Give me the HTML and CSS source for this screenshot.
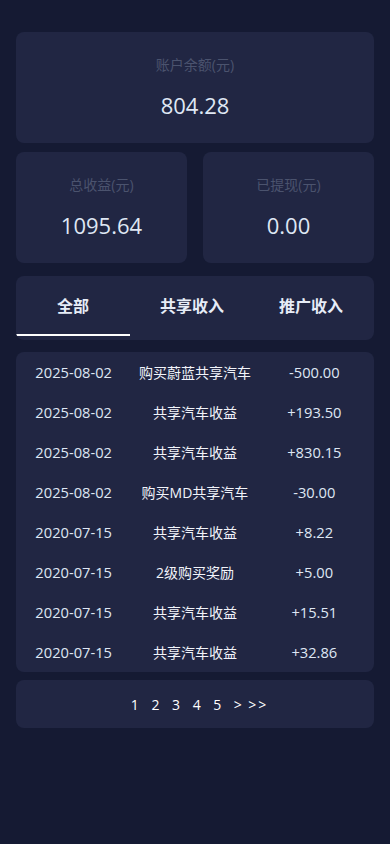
FILE: index.html
```html
<!DOCTYPE html>
<html lang="zh-CN">
<head>
    <meta charset="UTF-8">
    <meta name="viewport" content="width=device-width, initial-scale=1.0">
    <title>我的收益</title>
    <link rel="stylesheet" href="styles.css">
</head>
<body>
    <div class="page">
        <div class="card stat">
            <div class="stat-label">账户余额(元)</div>
            <div class="stat-value">804.28</div>
        </div>
        <div class="stat-row">
            <div class="card stat">
                <div class="stat-label">总收益(元)</div>
                <div class="stat-value">1095.64</div>
            </div>
            <div class="card stat">
                <div class="stat-label">已提现(元)</div>
                <div class="stat-value">0.00</div>
            </div>
        </div>
        <div class="card tabs">
            <div class="tab active">全部</div>
            <div class="tab">共享收入</div>
            <div class="tab">推广收入</div>
        </div>
        <div class="card records">
            <div class="record"><span class="date">2025-08-02</span><span class="desc">购买蔚蓝共享汽车</span><span class="amount">-500.00</span></div>
            <div class="record"><span class="date">2025-08-02</span><span class="desc">共享汽车收益</span><span class="amount">+193.50</span></div>
            <div class="record"><span class="date">2025-08-02</span><span class="desc">共享汽车收益</span><span class="amount">+830.15</span></div>
            <div class="record"><span class="date">2025-08-02</span><span class="desc">购买MD共享汽车</span><span class="amount">-30.00</span></div>
            <div class="record"><span class="date">2020-07-15</span><span class="desc">共享汽车收益</span><span class="amount">+8.22</span></div>
            <div class="record"><span class="date">2020-07-15</span><span class="desc">2级购买奖励</span><span class="amount">+5.00</span></div>
            <div class="record"><span class="date">2020-07-15</span><span class="desc">共享汽车收益</span><span class="amount">+15.51</span></div>
            <div class="record"><span class="date">2020-07-15</span><span class="desc">共享汽车收益</span><span class="amount">+32.86</span></div>
        </div>
        <div class="card pager">
            <a class="page-link">1</a>
            <a class="page-link">2</a>
            <a class="page-link">3</a>
            <a class="page-link">4</a>
            <a class="page-link">5</a>
            <a class="page-link">&gt;</a>
            <a class="page-link last">&gt;&gt;</a>
        </div>
    </div>
</body>
</html>
```

FILE: styles.css
```css
body {
    background: #151a33;
    margin: 0;
    font-family: "Open Sans", "Noto Sans CJK SC", sans-serif;
    color: #dfe7f4;
}
.page {
    padding: 32px 16px;
    display: flex;
    flex-direction: column;
}
.card {
    background: #212643;
    border-radius: 8px;
}
.stat {
    height: 111px;
    display: flex;
    flex-direction: column;
    align-items: center;
    justify-content: center;
    gap: 15px;
}
.stat-label {
    color: #4b536e;
    font-size: 14px;
    line-height: 20px;
}
.stat-value {
    font-size: 22px;
    line-height: 30px;
}
.stat-row {
    display: flex;
    gap: 16px;
    margin-top: 9px;
}
.stat-row .stat {
    flex: 1;
}
.tabs {
    margin-top: 13px;
    height: 64px;
    display: grid;
    grid-template-columns: repeat(3, 114px);
    column-gap: 5px;
    overflow: hidden;
}
.tab {
    display: flex;
    align-items: center;
    justify-content: center;
    height: 58px;
    font-size: 16px;
    font-weight: bold;
    color: #e6ecf7;
    border-bottom: 2px solid transparent;
}
.tab.active {
    border-bottom-color: #ffffff;
}
.records {
    margin-top: 12px;
}
.record {
    height: 40px;
    display: grid;
    grid-template-columns: 1fr 1fr 1fr;
    align-items: center;
    text-align: center;
    font-size: 14px;
}
.record .date {
    margin-right: 4px;
    font-size: 14.7px;
}
.record .amount {
    font-size: 14.7px;
}
.record .desc {
    color: #f2f4fa;
}
.pager {
    margin-top: 8px;
    height: 48px;
    padding-left: 9px;
    display: flex;
    justify-content: center;
    align-items: center;
    font-size: 14px;
}
.page-link {
    color: #ffffff;
    margin: 0 6.3px;
    cursor: pointer;
}
.page-link.last {
    margin-left: 0;
    letter-spacing: 2px;
}
```
